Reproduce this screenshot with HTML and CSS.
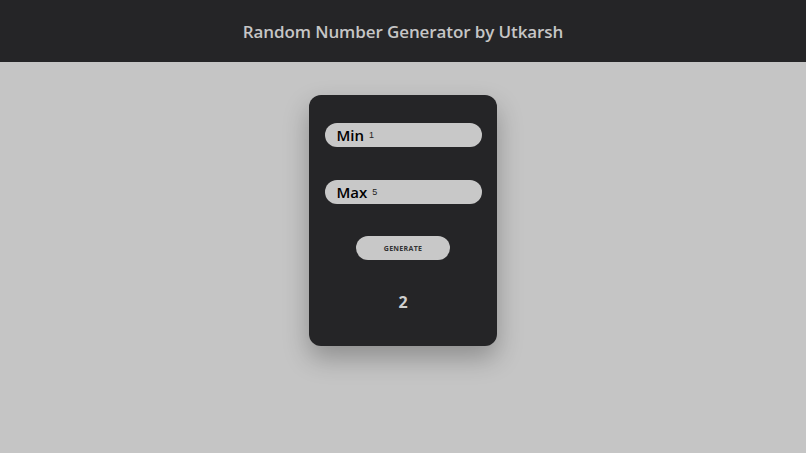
FILE: index.html
```html
<!DOCTYPE html>
<html>
<head>
<meta charset="utf-8">
<link rel="stylesheet" href="styles.css">
</head>
<body>
<header class="top">
  <h1 class="title">Random Number Generator by Utkarsh</h1>
</header>
<main class="page">
  <div class="card">
    <label class="field"><span class="field-label">Min</span><input class="field-input" type="text" value="1"></label>
    <label class="field"><span class="field-label">Max</span><input class="field-input" type="text" value="5"></label>
    <button class="btn">GENERATE</button>
    <div class="result">2</div>
  </div>
</main>
</body>
</html>
```
FILE: styles.css
```css
html, body {
  margin: 0;
  padding: 0;
  height: 100%;
}
body {
  background: #c5c5c5;
  font-family: "Open Sans", "Noto Sans", sans-serif;
}
.top {
  background: #252527;
  height: 62px;
  display: flex;
  align-items: center;
  justify-content: center;
}
.title {
  margin: 0;
  color: #c6c6c6;
  font-size: 17px;
  font-weight: 600;
  letter-spacing: -0.1px;
}
.page {
  display: flex;
  justify-content: center;
  padding-top: 33px;
}
.card {
  width: 188px;
  height: 251px;
  box-sizing: border-box;
  background: #252527;
  border-radius: 12px;
  box-shadow: 0 12px 26px rgba(0, 0, 0, 0.28);
  display: flex;
  flex-direction: column;
  align-items: center;
  padding-top: 28px;
}
.field {
  width: 157px;
  height: 24px;
  box-sizing: border-box;
  background: #c8c8c8;
  border-radius: 12px;
  display: flex;
  align-items: center;
  padding-left: 12px;
  margin-bottom: 33px;
}
.field-label {
  font-size: 15px;
  font-weight: 600;
  color: #000;
  margin-right: 5px;
}
.field-input {
  border: none;
  background: transparent;
  outline: none;
  font-family: "Liberation Sans", sans-serif;
  font-size: 9px;
  color: #222;
  padding: 0;
  width: 80px;
}
.btn {
  margin-top: -1px;
  width: 94px;
  height: 24px;
  border: none;
  border-radius: 12px;
  background: #c8c8c8;
  color: #333;
  font-family: "Open Sans", sans-serif;
  font-size: 7px;
  font-weight: 700;
  letter-spacing: 0.3px;
  cursor: pointer;
}
.result {
  margin-top: 31px;
  color: #cfcfcf;
  font-size: 16px;
  font-weight: 700;
}
```
